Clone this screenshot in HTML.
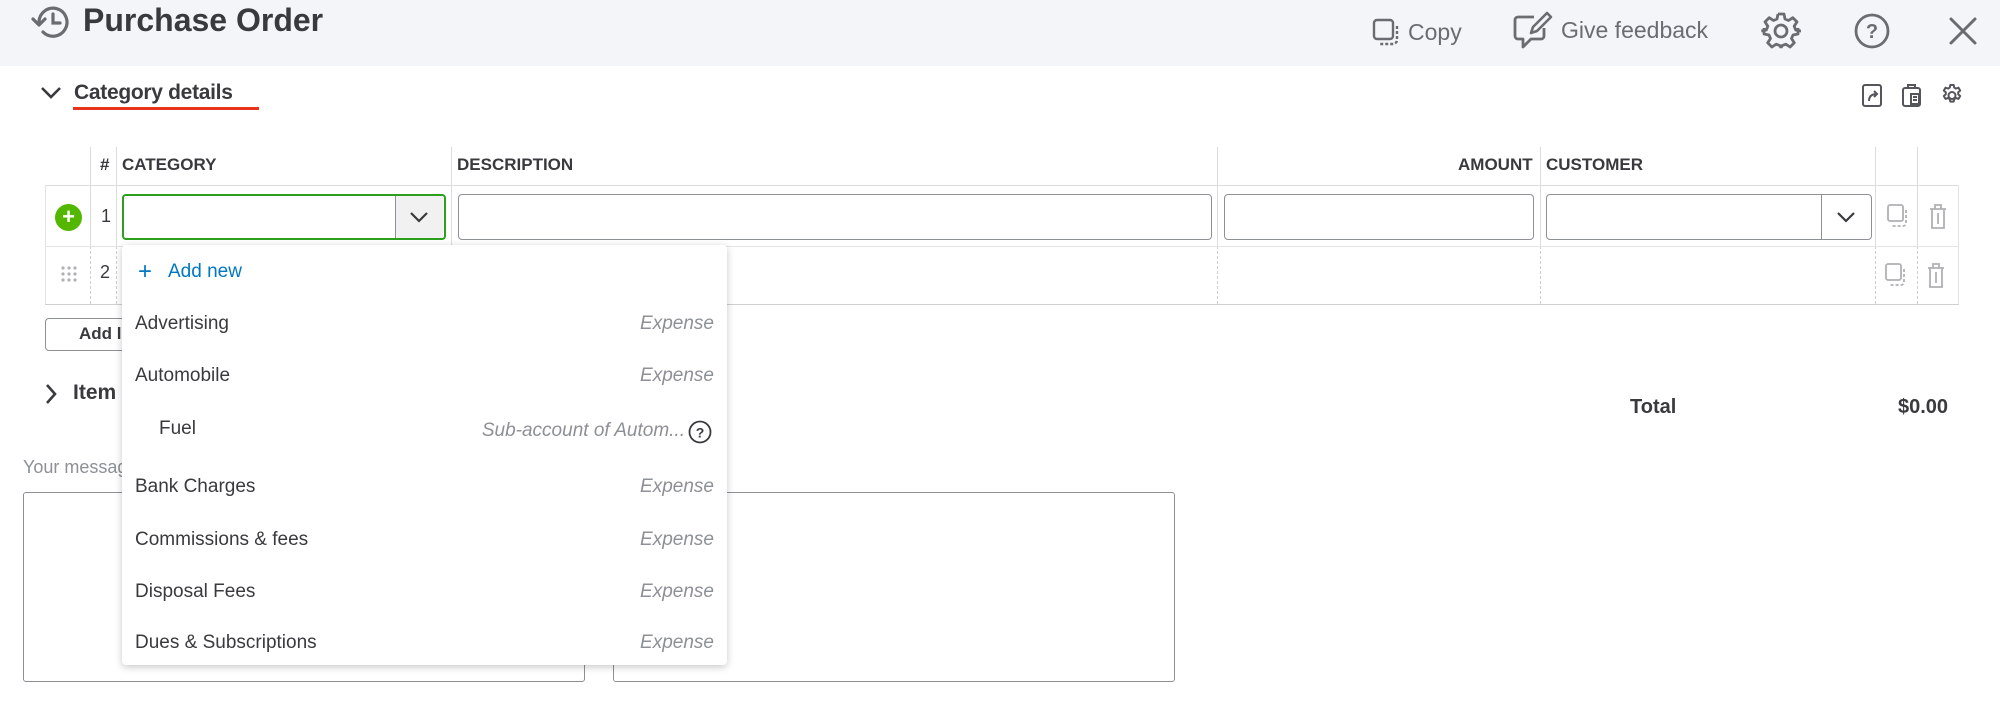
<!DOCTYPE html>
<html><head><meta charset="utf-8"><style>
*{box-sizing:border-box;margin:0;padding:0}
body{width:2000px;height:707px;overflow:hidden;background:#fff;font-family:"Liberation Sans",sans-serif;color:#393a3d;position:relative}
.a{position:absolute}
.hdr{left:0;top:0;width:2000px;height:66px;background:#f4f5f8}
.t{white-space:nowrap}
.th{font-size:17px;font-weight:bold;top:155px}
.vl{width:1px;background:#dcdcdc}
.vd{width:0;border-left:1px dashed #cfcfcf}
.inp{border:1px solid #8d9096;border-radius:4px;height:46px;top:194px;background:#fff}
.dd{left:122px;top:245px;width:605px;height:420px;background:#fff;border-radius:4px;box-shadow:0 2px 8px rgba(0,0,0,.22)}
.it{font-size:19px;left:13px}
.ex{font-size:19px;font-style:italic;color:#8d9096;right:13px}
.ta{border:1px solid #8d9096;border-radius:3px;top:492px;height:190px}
</style></head><body>
<div class="a hdr"></div>
<svg class="a" style="left:31px;top:3px" width="40" height="38" viewBox="0 0 40 38"><path d="M8 19a14 14 0 1 1 4 10" fill="none" stroke="#6b6c72" stroke-width="3.2" stroke-linecap="round"/><path d="M2 16l6 6 6-6" fill="none" stroke="#6b6c72" stroke-width="3.2" stroke-linecap="round" stroke-linejoin="round"/><path d="M22 11v9h7" fill="none" stroke="#6b6c72" stroke-width="3.2" stroke-linecap="round"/></svg>
<div class="a t" style="left:83px;top:2px;font-size:32px;font-weight:bold">Purchase Order</div>
<svg class="a" style="left:1372px;top:18px" width="30" height="30" viewBox="0 0 30 30"><rect x="2" y="2" width="19" height="19" rx="3" fill="none" stroke="#6b6c72" stroke-width="2.4"/><path d="M25 8v14a4 4 0 0 1-4 4H8" fill="none" stroke="#6b6c72" stroke-width="2.4" stroke-dasharray="3 2"/></svg>
<div class="a t" style="left:1408px;top:19px;font-size:23px;color:#6b6c72">Copy</div>
<svg class="a" style="left:1512px;top:10px" width="42" height="42" viewBox="0 0 42 42"><path d="M22 7H6a3 3 0 0 0-3 3v16a3 3 0 0 0 3 3h5v8l8-8h10a3 3 0 0 0 3-3v-8" fill="none" stroke="#6b6c72" stroke-width="2.8" stroke-linejoin="round"/><path d="M35 3l4 4-14 14-6 2 2-6z" fill="none" stroke="#6b6c72" stroke-width="2.6" stroke-linejoin="round"/></svg>
<div class="a t" style="left:1561px;top:17px;font-size:23px;color:#6b6c72">Give feedback</div>
<svg class="a" style="left:1761px;top:11px" width="40" height="40" viewBox="0 0 40 40"><g fill="none" stroke="#6b6c72" stroke-width="2.8" stroke-linejoin="round"><circle cx="20" cy="20" r="6"/><path d="M17 3h6l1 5 3.5 1.5 4.3-2.8 4.2 4.2-2.8 4.3L34.7 19l5 1v-.5 0 0M17 3l-1 5-3.5 1.5-4.3-2.8-4.2 4.2 2.8 4.3L5.3 19l-5 1"/><path d="M3 17v6l5 1 1.5 3.5-2.8 4.3 4.2 4.2 4.3-2.8L19 34.7l1 2.3h0M37 17v6l-5 1-1.5 3.5 2.8 4.3-4.2 4.2-4.3-2.8L21 34.7 20 37"/></g></svg>
<svg class="a" style="left:1853px;top:12px" width="38" height="38" viewBox="0 0 38 38"><circle cx="19" cy="19" r="16" fill="none" stroke="#6b6c72" stroke-width="2.8"/><text x="19" y="26" font-size="20" font-weight="bold" text-anchor="middle" fill="#6b6c72" font-family="Liberation Sans">?</text></svg>
<svg class="a" style="left:1948px;top:16px" width="30" height="30" viewBox="0 0 30 30"><path d="M3 3l24 24M27 3L3 27" stroke="#6b6c72" stroke-width="3" stroke-linecap="round"/></svg>

<svg class="a" style="left:40px;top:86px" width="22" height="14" viewBox="0 0 22 14"><path d="M2 2l9 9 9-9" fill="none" stroke="#393a3d" stroke-width="2.6"/></svg>
<div class="a t" style="left:74px;top:81px;font-size:21px;font-weight:bold;letter-spacing:-0.3px">Category details</div>
<div class="a" style="left:73px;top:107px;width:186px;height:3px;background:#e8331e"></div>
<svg class="a" style="left:1860px;top:82px" width="110" height="26" viewBox="0 0 110 26"><g fill="none" stroke="#55565b" stroke-width="2"><rect x="3" y="3" width="18" height="21" rx="2"/><path d="M9 19c0-5 3-7 8-7M14 9l3 3-3 3"/><rect x="43" y="6" width="17" height="18" rx="2"/><path d="M48 6V3h7v3"/><rect x="51" y="12" width="8" height="10"/><path d="M53 15h4M53 18h4"/></g><g transform="translate(80,1)"><path d="M12 9a3.5 3.5 0 1 0 0 7 3.5 3.5 0 0 0 0-7z" fill="none" stroke="#55565b" stroke-width="2"/><path d="M10.3 2h3.4l.5 2.6 1.8 1 2.5-.9 1.7 2.9-2 1.7v2l2 1.7-1.7 2.9-2.5-.9-1.8 1-.5 2.6h-3.4l-.5-2.6-1.8-1-2.5.9-1.7-2.9 2-1.7v-2l-2-1.7 1.7-2.9 2.5.9 1.8-1z" fill="none" stroke="#55565b" stroke-width="2" stroke-linejoin="round"/></g></svg>

<!-- table -->
<div class="a vl" style="left:90px;top:147px;height:99px"></div>
<div class="a vl" style="left:116px;top:147px;height:99px"></div>
<div class="a vl" style="left:451px;top:147px;height:99px"></div>
<div class="a vl" style="left:1217px;top:147px;height:99px"></div>
<div class="a vl" style="left:1540px;top:147px;height:99px"></div>
<div class="a vl" style="left:1875px;top:147px;height:99px"></div>
<div class="a vl" style="left:1917px;top:147px;height:99px"></div>
<div class="a vd" style="left:90px;top:246px;height:58px"></div>
<div class="a vd" style="left:116px;top:246px;height:58px"></div>
<div class="a vd" style="left:1217px;top:246px;height:58px"></div>
<div class="a vd" style="left:1540px;top:246px;height:58px"></div>
<div class="a vd" style="left:1875px;top:246px;height:58px"></div>
<div class="a vd" style="left:1917px;top:246px;height:58px"></div>
<div class="a" style="left:45px;top:185px;width:1914px;height:1px;background:#dcdcdc"></div>
<div class="a" style="left:45px;top:185px;width:1px;height:120px;background:#e4e4e4"></div>
<div class="a" style="left:1958px;top:185px;width:1px;height:120px;background:#e4e4e4"></div>
<div class="a" style="left:45px;top:246px;width:1914px;height:1px;background:#e4e4e4"></div>
<div class="a" style="left:45px;top:304px;width:1914px;height:1px;background:#d0d0d0"></div>
<div class="a t th" style="left:100px">#</div>
<div class="a t th" style="left:122px">CATEGORY</div>
<div class="a t th" style="left:457px">DESCRIPTION</div>
<div class="a t th" style="left:1458px">AMOUNT</div>
<div class="a t th" style="left:1546px">CUSTOMER</div>

<div class="a" style="left:55px;top:204px;width:27px;height:27px;border-radius:50%;background:#53b700;color:#fff;font-weight:bold;font-size:22px;line-height:26px;text-align:center">+</div>
<div class="a t" style="left:101px;top:206px;font-size:18px">1</div>
<div class="a inp" style="left:122px;width:324px;border:2.5px solid #2ca01c"></div>
<div class="a" style="left:395px;top:196px;width:48px;height:42px;background:#f1f1f1;border-left:1px solid #8d9096"></div>
<svg class="a" style="left:409px;top:210px" width="20" height="14" viewBox="0 0 20 14"><path d="M2 3l8 8 8-8" fill="none" stroke="#393a3d" stroke-width="2.2"/></svg>
<div class="a inp" style="left:458px;width:754px"></div>
<div class="a inp" style="left:1224px;width:310px"></div>
<div class="a inp" style="left:1546px;width:326px"></div>
<div class="a" style="left:1821px;top:195px;width:1px;height:44px;background:#8d9096"></div>
<svg class="a" style="left:1836px;top:210px" width="20" height="14" viewBox="0 0 20 14"><path d="M2 3l8 8 8-8" fill="none" stroke="#393a3d" stroke-width="2.2"/></svg>
<svg class="a" style="left:1885px;top:202px" width="70" height="30" viewBox="0 0 70 30"><g fill="none" stroke="#b0b1b5" stroke-width="1.8"><rect x="3" y="3" width="15" height="16" rx="2"/><path d="M21 8v13a3 3 0 0 1-3 3H7" stroke-dasharray="3 2"/><path d="M45 7h16M50 7V3h6v4M47 7v19h12V7M53 11v11"/></g></svg>
<svg class="a" style="left:61px;top:266px" width="16" height="16" viewBox="0 0 16 16" fill="#b0b1b5"><circle cx="2" cy="2" r="1.6"/><circle cx="8" cy="2" r="1.6"/><circle cx="14" cy="2" r="1.6"/><circle cx="2" cy="8" r="1.6"/><circle cx="8" cy="8" r="1.6"/><circle cx="14" cy="8" r="1.6"/><circle cx="2" cy="14" r="1.6"/><circle cx="8" cy="14" r="1.6"/><circle cx="14" cy="14" r="1.6"/></svg>
<div class="a t" style="left:100px;top:262px;font-size:18px">2</div>
<svg class="a" style="left:1883px;top:261px" width="70" height="30" viewBox="0 0 70 30"><g fill="none" stroke="#b0b1b5" stroke-width="1.8"><rect x="3" y="3" width="15" height="16" rx="2"/><path d="M21 8v13a3 3 0 0 1-3 3H7" stroke-dasharray="3 2"/><path d="M45 7h16M50 7V3h6v4M47 7v19h12V7M53 11v11"/></g></svg>

<div class="a" style="left:45px;top:318px;width:100px;height:33px;border:1.5px solid #8d9096;border-radius:4px"></div>
<div class="a t" style="left:79px;top:324px;font-size:17px;font-weight:bold">Add lines</div>

<svg class="a" style="left:44px;top:383px" width="14" height="22" viewBox="0 0 14 22"><path d="M3 2l8 9-8 9" fill="none" stroke="#393a3d" stroke-width="2.6"/></svg>
<div class="a t" style="left:73px;top:381px;font-size:21px;font-weight:bold">Item details</div>
<div class="a t" style="left:1630px;top:396px;font-size:20px;font-weight:bold">Total</div>
<div class="a t" style="left:1898px;top:396px;font-size:20px;font-weight:bold">$0.00</div>
<div class="a t" style="left:23px;top:457px;font-size:18px;color:#8d9096">Your message to vendor</div>
<div class="a ta" style="left:23px;width:562px"></div>
<div class="a ta" style="left:613px;width:562px"></div>

<div class="a dd">
<div class="a t" style="left:16px;top:13px;font-size:24px;color:#0077c5">+</div>
<div class="a t" style="left:46px;top:16px;font-size:19px;color:#0077c5">Add new</div>
<div class="a t it" style="top:68px">Advertising</div><div class="a t ex" style="top:68px">Expense</div>
<div class="a t it" style="top:120px">Automobile</div><div class="a t ex" style="top:120px">Expense</div>
<div class="a t it" style="top:173px;left:37px">Fuel</div><div class="a t ex" style="top:175px;right:42px">Sub-account of Autom...</div>
<svg class="a" style="left:565px;top:174px" width="26" height="26" viewBox="0 0 26 26"><circle cx="13" cy="13" r="10.5" fill="none" stroke="#393a3d" stroke-width="1.8"/><text x="13" y="18.5" font-size="14" font-weight="bold" text-anchor="middle" fill="#393a3d" font-family="Liberation Sans">?</text></svg>
<div class="a t it" style="top:231px">Bank Charges</div><div class="a t ex" style="top:231px">Expense</div>
<div class="a t it" style="top:284px">Commissions &amp; fees</div><div class="a t ex" style="top:284px">Expense</div>
<div class="a t it" style="top:336px">Disposal Fees</div><div class="a t ex" style="top:336px">Expense</div>
<div class="a t it" style="top:387px">Dues &amp; Subscriptions</div><div class="a t ex" style="top:387px">Expense</div>
</div>
</body></html>
